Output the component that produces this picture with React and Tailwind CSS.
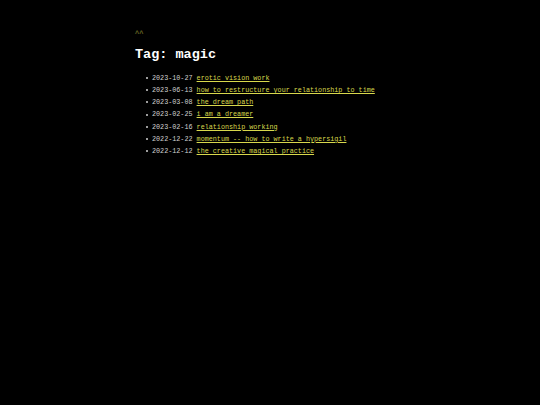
export default function App() {
  const items = [
    ["2023-10-27", "erotic vision work"],
    ["2023-06-13", "how to restructure your relationship to time"],
    ["2023-03-08", "the dream path"],
    ["2023-02-25", "i am a dreamer"],
    ["2023-02-16", "relationship working"],
    ["2022-12-22", "momentum -- how to write a hypersigil"],
    ["2022-12-12", "the creative magical practice"],
  ];
  return (
    <div className="min-h-[405px] w-[540px] bg-black text-[#d0d0d0]" style={{ fontFamily: '"Liberation Mono", monospace' }}>
      <div className="pl-[135px] pt-[30px]">
        <div className="text-[7px] font-bold leading-[8px] text-[#6b6b26]">^^</div>
        <h1 className="mt-[9px] text-[13.5px] font-bold leading-[16px] text-white">Tag: magic</h1>
        <ul className="mt-[9px] pl-[17px] text-[6.75px] leading-[12.15px]">
          {items.map(([d, t]) => (
            <li key={d + t} className="flex items-center">
              <span className="mr-[4px] inline-block h-[2px] w-[2px] -ml-[6px] rounded-full bg-[#d0d0d0]"></span>
              <span>{d}&nbsp;</span>
              <a href="#" className="text-[#d8d84c] underline">{t}</a>
            </li>
          ))}
        </ul>
      </div>
    </div>
  );
}
